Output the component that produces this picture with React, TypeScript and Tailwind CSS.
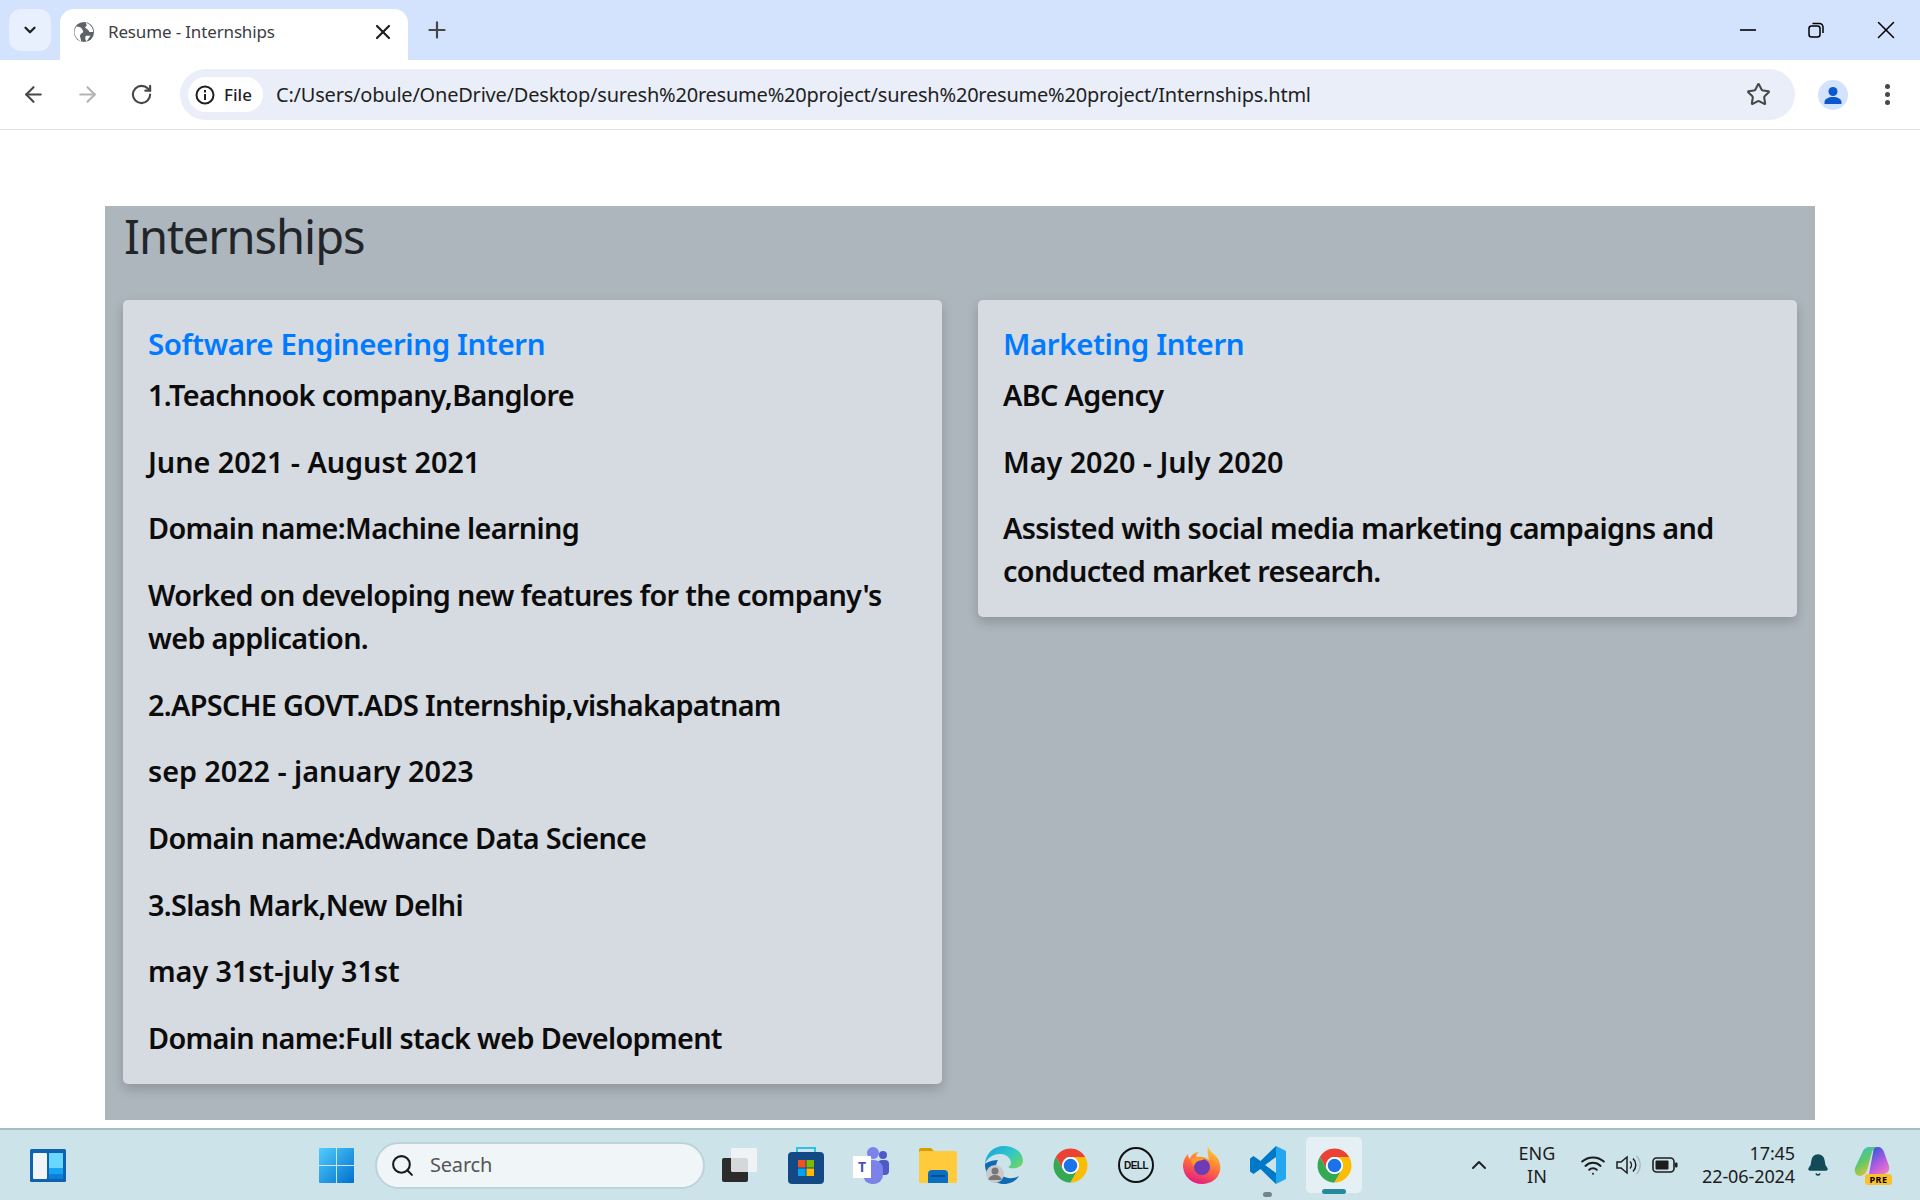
import { ArrowLeft, ArrowRight, RotateCw, Star, Plus, X, ChevronDown, ChevronUp, Search, Wifi, Bell } from 'lucide-react'

const uiFont = 'font-["Noto_Sans","Open_Sans",sans-serif]'

function ChromeIcon() {
  return (
    <svg viewBox="0 0 48 48" className="w-[37px] h-[37px]">
      <path d="M4.95 13A22 22 0 0 1 43.05 13H24A11 11 0 0 0 14.47 29.5Z" fill="#ea4335" />
      <path d="M4.95 13L14.47 29.5A11 11 0 0 0 33.53 29.5L24 46A22 22 0 0 1 4.95 13Z" fill="#34a853" />
      <path d="M43.05 13H24A11 11 0 0 1 33.53 29.5L24 46A22 22 0 0 0 43.05 13Z" fill="#fbbc04" />
      <circle cx="24" cy="24" r="11" fill="#fff" />
      <circle cx="24" cy="24" r="8.8" fill="#1a73e8" />
    </svg>
  )
}

function WidgetsIcon() {
  return (
    <svg viewBox="0 0 36 33" className="w-[36px] h-[33px]">
      <rect width="36" height="33" rx="1.5" fill="#0f62ad" />
      <rect x="3" y="4" width="14" height="26" rx="1" fill="#f2f5f7" />
      <rect x="19" y="4" width="14" height="15" fill="#69d7ff" />
      <rect x="19" y="19" width="14" height="6" fill="#18a3f0" />
      <rect x="19" y="25" width="14" height="5" fill="#0a80d8" />
    </svg>
  )
}

function StartIcon() {
  return (
    <svg viewBox="0 0 35 35" className="w-[35px] h-[35px]">
      <defs>
        <linearGradient id="st" x1="0" y1="0" x2="1" y2="1">
          <stop offset="0" stopColor="#52cdfb" />
          <stop offset="1" stopColor="#0070d0" />
        </linearGradient>
      </defs>
      <path d="M1 0H17V17H0V1a1 1 0 0 1 1-1ZM18 0H34a1 1 0 0 1 1 1V17H18ZM0 18H17V35H1a1 1 0 0 1-1-1ZM18 18H35V34a1 1 0 0 1-1 1H18Z" fill="url(#st)" />
    </svg>
  )
}

function TaskViewIcon() {
  return (
    <svg viewBox="0 0 36 36" className="w-[36px] h-[36px]">
      <rect x="1" y="11" width="26" height="24" rx="2" fill="#2b2b2b" />
      <rect x="10" y="1" width="26" height="24" rx="1.5" fill="#f4f6f7" fillOpacity="0.85" />
    </svg>
  )
}

function StoreIcon() {
  return (
    <svg viewBox="0 0 36 38" className="w-[36px] h-[38px]">
      <path d="M9 7V2h18v5" fill="none" stroke="#2cc3ea" strokeWidth="2" />
      <rect y="6" width="36" height="32" rx="4" fill="#134a85" />
      <rect x="10" y="14" width="7.5" height="7.5" fill="#f25022" />
      <rect x="18.5" y="14" width="7.5" height="7.5" fill="#7fba00" />
      <rect x="10" y="22.5" width="7.5" height="7.5" fill="#00a4ef" />
      <rect x="18.5" y="22.5" width="7.5" height="7.5" fill="#ffb900" />
    </svg>
  )
}

function TeamsIcon() {
  return (
    <div className="relative w-[38px] h-[38px]">
      <svg viewBox="0 0 38 38" className="w-[38px] h-[38px]">
        <circle cx="30" cy="9" r="4" fill="#5059c9" />
        <rect x="25" y="14" width="11" height="15" rx="4" fill="#5059c9" />
        <circle cx="20" cy="7" r="6" fill="#7b83eb" />
        <rect x="10" y="14" width="20" height="24" rx="9" fill="#7b83eb" />
      </svg>
      <div className="absolute left-0 top-[10px] w-[18px] h-[22px] bg-white flex items-center justify-center text-[14px] font-bold leading-none text-[#4b53bc]">
        T
      </div>
    </div>
  )
}

function FolderIcon() {
  return (
    <svg viewBox="0 0 38 36" className="w-[38px] h-[36px]">
      <path d="M0 3a2 2 0 0 1 2-2h10l4 4h-16Z" fill="#d69e00" />
      <rect y="4" width="38" height="32" rx="1.5" fill="#ffcb3d" />
      <path d="M9 36v-9a4 4 0 0 1 4-4h12a4 4 0 0 1 4 4v9Z" fill="#0a6fc2" />
      <rect x="12" y="28" width="14" height="2" fill="#064f8f" />
    </svg>
  )
}

function EdgeIcon() {
  return (
    <svg viewBox="0 0 38 38" className="w-[38px] h-[38px]">
      <defs>
        <linearGradient id="eg" x1="0" y1="0" x2="1" y2="0.7">
          <stop offset="0" stopColor="#1b9de2" />
          <stop offset="0.6" stopColor="#2fc8c8" />
          <stop offset="1" stopColor="#66d36e" />
        </linearGradient>
      </defs>
      <path d="M19 0C8 0 .5 8 0 18c3-7 9-10 15-10 7 0 11 5 11 9 0 2-1 3-3 4 4 3 15 1 15-6C38 6 29 0 19 0Z" fill="url(#eg)" />
      <path d="M0 18C0 29 8 38 19 38c6 0 12-3 15-8-5 3-13 3-18-1-5-3-7-8-3-15C6 14 1 17 0 18Z" fill="#0f6ab5" />
      <circle cx="10" cy="28" r="9" fill="#c9c9c9" />
      <circle cx="10" cy="25" r="3.5" fill="#777" />
      <path d="M3.5 34a6.5 5 0 0 1 13 0Z" fill="#777" />
    </svg>
  )
}

function DellIcon() {
  return (
    <div className="w-[36px] h-[36px] rounded-full border-2 border-[#111] flex items-center justify-center font-['Liberation_Sans',sans-serif] text-[10px] font-bold tracking-[-0.5px] text-[#111]">
      DELL
    </div>
  )
}

function FirefoxIcon() {
  return (
    <svg viewBox="0 0 38 38" className="w-[38px] h-[38px]">
      <defs>
        <linearGradient id="ff" x1="0.7" y1="0" x2="0.3" y2="1">
          <stop offset="0" stopColor="#ffd02f" />
          <stop offset="0.5" stopColor="#ff7139" />
          <stop offset="1" stopColor="#e31587" />
        </linearGradient>
      </defs>
      <path d="M25 0c1 5 4 6 8 10 4 5 5 10 4 15-2 8-9 13-18 13C9 38 1 31 0 21c0-6 2-10 5-13 0 3 1 4 2 5 1-4 5-7 9-7-3 2-3 4-2 5 4-1 9 0 12 3-1-5-2-9-1-14Z" fill="url(#ff)" />
      <circle cx="19" cy="21" r="8" fill="#6e3bb6" />
      <path d="M8 13c4-2 10-2 13 1-5 0-9 2-10 6-2-2-3-4-3-7Z" fill="#ff9a2e" />
    </svg>
  )
}

function VscodeIcon() {
  return (
    <svg viewBox="0 0 36 38" className="w-[36px] h-[38px]">
      <path fillRule="evenodd" d="M26 0 10.500 15 3.500 10 0 12.500v13L3.500 28l7-5L26 38V0ZM26 11 15 19l11 8Z" fill="#0078c8" />
      <path d="M26 0 36 5v28l-10 5Z" fill="#22a7f0" />
    </svg>
  )
}

function CopilotIcon() {
  return (
    <div className="relative w-[36px] h-[36px]">
      <svg viewBox="0 0 36 32" className="w-[36px] h-[32px]">
        <defs>
          <linearGradient id="cp" x1="0" y1="0" x2="0.6" y2="1">
            <stop offset="0" stopColor="#37b8e8" />
            <stop offset="0.5" stopColor="#5cc96a" />
            <stop offset="1" stopColor="#f2c12e" />
          </linearGradient>
          <linearGradient id="cq" x1="0.2" y1="0" x2="0.8" y2="1">
            <stop offset="0" stopColor="#2a5bd8" />
            <stop offset="0.6" stopColor="#b85ce0" />
            <stop offset="1" stopColor="#f07cc0" />
          </linearGradient>
        </defs>
        <path d="M20 0h4c3 0 5 2 6 5l5 14c1 4-1 8-6 8H15Z" fill="url(#cq)" />
        <path d="M9 4c1-2 3-4 6-4h10c-4 0-6 2-7 5l-4 15c-1 5-4 9-8 9-4 0-6-4-5-8Z" fill="url(#cp)" />
      </svg>
      <div className="absolute right-[-2px] bottom-[-2px] w-[27px] h-[11px] rounded-[3px] bg-[#fbc02d] flex items-center justify-center text-[9px] font-bold leading-none tracking-[0.5px] text-black">
        PRE
      </div>
    </div>
  )
}

function TabBar() {
  return (
    <div className="h-[60px] bg-[#d3e3fd] flex items-start shrink-0">
      <div className="w-[42px] h-[42px] mt-[9px] ml-[9px] rounded-[12px] bg-[#e8f0fe] flex items-center justify-center">
        <ChevronDown size={18} strokeWidth={3} className="text-[#1f1f1f]" />
      </div>
      <div className="w-[348px] h-[51px] mt-[9px] ml-[9px] rounded-t-[14px] bg-white flex items-center pl-[13px] pr-[13px] pb-[5px]">
        <svg viewBox="0 0 24 24" className="w-[22px] h-[22px]">
          <circle cx="12" cy="12" r="11" fill="#5f6368" />
          <path d="M4 6c3 0 5 1 6 3s2 3 0 4-3 3-2 5l1 4C5 21 2 17 1.5 12 2 9 3 7 4 6ZM14 2l1 3-2 2c2 2 4 2 5 5h4c0-5-4-9-8-10ZM14 16h5l-4 6c-2-2-2-4-1-6Z" fill="#fff" />
        </svg>
        <span className="ml-[13px] text-[17px] tracking-[-0.15px] text-[#3c4043] flex-1">Resume - Internships</span>
        <X size={24} strokeWidth={2.2} className="text-[#1f1f1f]" />
      </div>
      <Plus size={26} strokeWidth={2} className="ml-[16px] mt-[17px] text-[#474747]" />
      <div className="ml-auto flex items-center mt-[15px]">
        <svg viewBox="0 0 16 16" className="w-[16px] h-[16px] text-black mr-[52px]"><path d="M0 8h16" stroke="currentColor" strokeWidth="1.6" /></svg>
        <svg viewBox="0 0 16 16" className="w-[16px] h-[16px] text-black mr-[47px]" fill="none" stroke="currentColor" strokeWidth="1.5">
          <rect x="1" y="4" width="11" height="11" rx="2.5" />
          <path d="M4.5 1.5h7a3.5 3.5 0 0 1 3.5 3.5v6" />
        </svg>
        <X size={30} strokeWidth={1.2} className="text-black mr-[19px]" />
      </div>
    </div>
  )
}

function Toolbar() {
  return (
    <div className="h-[70px] bg-white border-b border-[#e3e3e3] flex items-center shrink-0">
      <ArrowLeft size={25} strokeWidth={2} className="ml-[21px] text-[#474747]" />
      <ArrowRight size={25} strokeWidth={2} className="ml-[29px] text-[#b4b4b4]" />
      <RotateCw size={23} strokeWidth={2.2} className="ml-[30px] text-[#474747]" />
      <div className="ml-[27px] w-[1615px] h-[51px] rounded-full bg-[#e9eef8] flex items-center pl-[8px] pr-[24px]">
        <div className="w-[75px] h-[35px] rounded-full bg-white flex items-center pl-[7px]">
          <svg viewBox="0 0 20 20" className="w-[20px] h-[20px]" fill="none" stroke="#1f1f1f" strokeWidth="2">
            <circle cx="10" cy="10" r="8.5" />
            <path d="M10 9v6M10 5v2.4" />
          </svg>
          <span className="ml-[9px] text-[17px] font-medium text-[#1f1f1f]">File</span>
        </div>
        <span className="ml-[13px] text-[20px] tracking-[-0.215px] text-[#1f1f1f] flex-1 whitespace-nowrap">
          C:/Users/obule/OneDrive/Desktop/suresh%20resume%20project/suresh%20resume%20project/Internships.html
        </span>
        <Star size={25} strokeWidth={2} className="text-[#474747]" />
      </div>
      <div className="ml-[23px] w-[30px] h-[30px] rounded-full bg-[#d3e3fd] flex items-center justify-center">
        <svg viewBox="0 0 24 24" className="w-[24px] h-[24px]" fill="#0b57d0">
          <circle cx="12" cy="8.5" r="4.5" />
          <path d="M3.5 21v-2c0-3 4-5 8.5-5s8.500 2 8.500 5v2Z" />
        </svg>
      </div>
      <div className="ml-[37px] flex flex-col gap-[3px]">
        <div className="w-[5px] h-[5px] rounded-full bg-[#474747]" />
        <div className="w-[5px] h-[5px] rounded-full bg-[#474747]" />
        <div className="w-[5px] h-[5px] rounded-full bg-[#474747]" />
      </div>
    </div>
  )
}

function Card({ title, lines }: { title: string; lines: string[] }) {
  return (
    <div className="w-[820px] bg-[#d6dae1] rounded-[5px] shadow-[0_5px_12px_rgba(0,0,0,0.18)] pt-[22px] pb-[1px] px-[25px]">
      <h5 className="text-[29.5px] leading-[44px] font-semibold tracking-[-0.42px] text-[#007bff] mb-[7px]">{title}</h5>
      {lines.map((line) => (
        // digits run wider in the original face, so date lines get looser spacing
        <p
          key={line}
          className={`text-[28.8px] leading-[43.200px] font-semibold text-[#0c0c0c] mb-[23.450px] ${
            /\d{2}/.test(line) ? 'tracking-[-0.05px]' : 'tracking-[-0.66px]'
          }`}
        >
          {line}
        </p>
      ))}
    </div>
  )
}

function Taskbar() {
  const pinned = [
    <StoreIcon key="store" />,
    <TeamsIcon key="teams" />,
    <FolderIcon key="folder" />,
    <EdgeIcon key="edge" />,
    <ChromeIcon key="chrome" />,
    <DellIcon key="dell" />,
    <FirefoxIcon key="firefox" />,
  ]
  return (
    <div className="h-[72px] bg-[#cde3ea] border-t-2 border-[#a9bcc4] flex items-center shrink-0 relative">
      <div className="w-[304px] pl-[30px] shrink-0 flex items-center">
        <WidgetsIcon />
      </div>
      <div className="w-[66px] flex justify-center shrink-0 pr-[1px]">
        <StartIcon />
      </div>
      <div className="ml-[5px] w-[330px] h-[47px] rounded-full bg-[#f0f6f8] border-2 border-[#bdd2da] flex items-center pl-[13px] shrink-0">
        <Search size={25} strokeWidth={2} className="text-[#1a1a1a]" />
        <span className="ml-[15px] text-[20px] tracking-[-0.2px] text-[#555]">Search</span>
      </div>
      <div className="w-[68px] flex justify-center shrink-0">
        <TaskViewIcon />
      </div>
      {pinned.map((icon, i) => (
        <div key={i} className="w-[66px] flex justify-center shrink-0">
          {icon}
        </div>
      ))}
      <div className="w-[66px] flex justify-center shrink-0 relative">
        <VscodeIcon />
        <div className="absolute bottom-[-13px] left-[28px] w-[9px] h-[5px] rounded-full bg-[#71848b]" />
      </div>
      <div className="w-[56px] h-[56px] mx-[5px] rounded-[5px] bg-[#e5f0f5] flex items-center justify-center shrink-0 relative">
        <ChromeIcon />
        <div className="absolute bottom-[-1px] left-[16px] w-[24px] h-[5px] rounded-full bg-[#258a9e]" />
      </div>

      <ChevronUp size={24} strokeWidth={2} className="ml-[100px] text-[#222] shrink-0" />
      <div className="ml-[26px] w-[40px] text-center text-[18px] leading-[23px] text-[#1c1c1c] shrink-0">
        <div>ENG</div>
        <div>IN</div>
      </div>
      <Wifi size={26} strokeWidth={1.8} className="ml-[23px] text-[#1c1c1c] shrink-0" />
      <svg viewBox="0 0 26 24" className="ml-[9px] w-[26px] h-[24px] shrink-0" fill="none" stroke="#1c1c1c" strokeWidth="1.5">
        <path d="M2 9v6h4l6 5V4L6 9Z" />
        <path d="M15 8.500a5 5 0 0 1 0 7M18 5.500a9 9 0 0 1 0 13" />
        <path d="M21.500 3a13 13 0 0 1 0 18" stroke="#a7bcc4" />
      </svg>
      <svg viewBox="0 0 26 18" className="ml-[11px] w-[26px] h-[18px] shrink-0">
        <rect x="1" y="2" width="21" height="14" rx="3.500" fill="none" stroke="#1c1c1c" strokeWidth="1.6" />
        <rect x="3.500" y="4.500" width="13" height="9" rx="1" fill="#1c1c1c" />
        <rect x="23" y="6.500" width="2.500" height="5" rx="1" fill="#1c1c1c" />
      </svg>
      <div className="ml-[21px] w-[96px] text-right text-[18px] leading-[23px] tracking-[-0.1px] text-[#1c1c1c] shrink-0">
        <div>17:45</div>
        <div className="whitespace-nowrap">22-06-2024</div>
      </div>
      <Bell size={24} fill="#134a5a" strokeWidth={1.5} className="ml-[11px] text-[#134a5a] shrink-0" />
      <div className="ml-[24px] shrink-0">
        <CopilotIcon />
      </div>
    </div>
  )
}

export default function App() {
  return (
    <div className={`h-screen w-full flex flex-col overflow-hidden bg-white ${uiFont}`}>
      <TabBar />
      <Toolbar />
      <div className="flex-1 min-h-0 pt-[76px] px-[105px] pb-[8px]">
        <div className="h-full bg-[#adb5bd] px-[18px]">
          <h2 className="text-[47px] leading-[60px] tracking-[-1.05px] pl-[1px] text-[#212529] mb-[34px]">Internships</h2>
          <div className="flex items-start gap-[36px]">
            <Card
              title="Software Engineering Intern"
              lines={[
                '1.Teachnook company,Banglore',
                'June 2021 - August 2021',
                'Domain name:Machine learning',
                "Worked on developing new features for the company's web application.",
                '2.APSCHE GOVT.ADS Internship,vishakapatnam',
                'sep 2022 - january 2023',
                'Domain name:Adwance Data Science',
                '3.Slash Mark,New Delhi',
                'may 31st-july 31st',
                'Domain name:Full stack web Development',
              ]}
            />
            <Card
              title="Marketing Intern"
              lines={[
                'ABC Agency',
                'May 2020 - July 2020',
                'Assisted with social media marketing campaigns and conducted market research.',
              ]}
            />
          </div>
        </div>
      </div>
      <Taskbar />
    </div>
  )
}
